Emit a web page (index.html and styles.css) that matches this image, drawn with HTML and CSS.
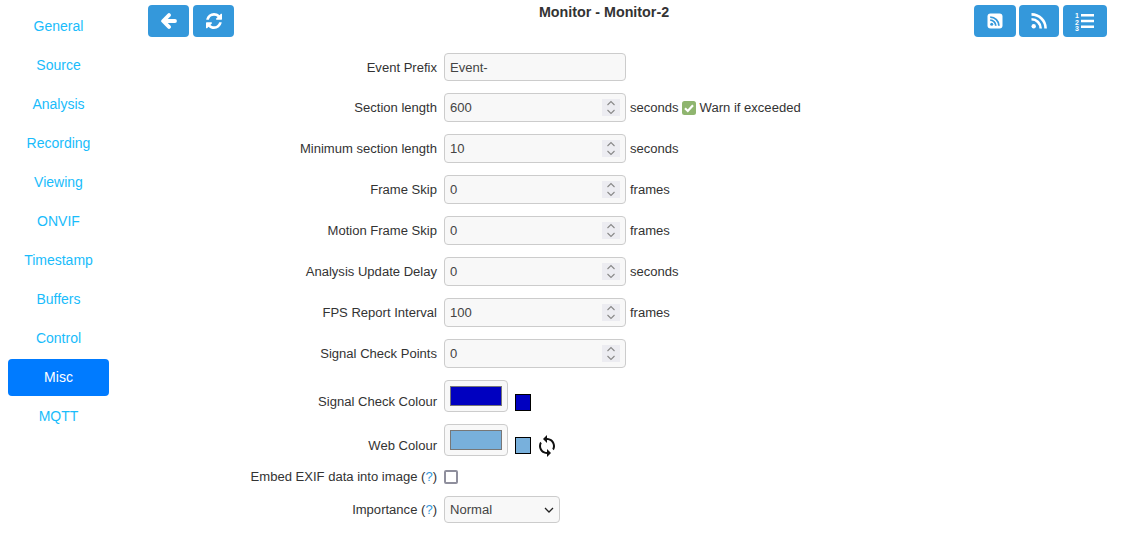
FILE: index.html
```html
<!DOCTYPE html>
<html lang="en">
<head>
<meta charset="utf-8">
<title>Monitor - Monitor-2</title>
<link rel="stylesheet" href="styles.css">
</head>
<body>
<div class="app">
  <nav class="side">
    <a class="tab" href="#">General</a>
    <a class="tab" href="#">Source</a>
    <a class="tab" href="#">Analysis</a>
    <a class="tab" href="#">Recording</a>
    <a class="tab" href="#">Viewing</a>
    <a class="tab" href="#">ONVIF</a>
    <a class="tab" href="#">Timestamp</a>
    <a class="tab" href="#">Buffers</a>
    <a class="tab" href="#">Control</a>
    <a class="tab active" href="#">Misc</a>
    <a class="tab" href="#">MQTT</a>
  </nav>
  <main class="main">
    <header class="head">
      <div class="btns">
        <button class="btn w41" type="button"><svg class="ico" viewBox="0 0 16 16"><path d="M8 2.100 2.100 8 8 13.900M3 8h11" fill="none" stroke="#fff" stroke-width="3.800" stroke-linecap="round" stroke-linejoin="round"/></svg></button>
        <button class="btn w41" type="button"><svg class="ico" viewBox="0 0 1536 1536"><path fill="#fff" d="M1511 928q0 5-1 7-64 268-268 434.500T764 1536q-146 0-282.500-55T238 1324l-129 129q-19 19-45 19t-45-19-19-45V960q0-26 19-45t45-19h448q26 0 45 19t19 45-19 45l-137 137q71 66 161 102t187 36q134 0 250-65t186-179q11-17 53-117 8-23 30-23h192q13 0 22.500 9.500t9.500 22.500zm25-800v448q0 26-19 45t-45 19h-448q-26 0-45-19t-19-45 19-45l138-138Q969 256 768 256q-134 0-250 65T332 500q-11 17-53 117-8 23-30 23H50q-13 0-22.500-9.500T18 608v-7q65-268 270-434.500T768 0q146 0 284 55.500T1297 212l130-129q19-19 45-19t45 19 19 45z"/></svg></button>
      </div>
      <h1 class="title">Monitor - Monitor-2</h1>
      <div class="btns btns-right">
        <button class="btn w42" type="button"><svg class="ico" viewBox="0 0 16 16"><rect x="0.500" y="0.500" width="15" height="15" rx="3" fill="#fff"/><circle cx="4.700" cy="11.300" r="1.500" fill="#3498db"/><path d="M3.200 7.200a5.600 5.600 0 0 1 5.600 5.600M3.200 4.100a8.700 8.700 0 0 1 8.700 8.700" fill="none" stroke="#3498db" stroke-width="1.800"/></svg></button>
        <button class="btn w40" type="button"><svg class="ico" viewBox="0 0 16 16"><circle cx="2.700" cy="13.300" r="2.200" fill="#fff"/><path d="M.5 6.300a9.200 9.200 0 0 1 9.200 9.200M.5 1.400a14.100 14.100 0 0 1 14.100 14.100" fill="none" stroke="#fff" stroke-width="2.600"/></svg></button>
        <button class="btn w44" type="button"><svg class="ico-list" viewBox="0 0 19 20"><text class="num" x="0" y="6.500">1</text><text class="num" x="0" y="13.500">2</text><text class="num" x="0" y="20">3</text><path d="M6 4.200h13M6 10h13M6 15.800h13" stroke="#fff" stroke-width="2.400" fill="none"/></svg></button>
      </div>
    </header>
    <form class="form">
      <div class="row"><label class="lab">Event Prefix</label><input class="field short" type="text" value="Event-"></div>
      <div class="row"><label class="lab">Section length</label><input class="field" type="number" value="600"><span class="unit">seconds</span><span class="warn"><svg class="tick" viewBox="0 0 14 14"><rect width="14" height="14" rx="2.500" fill="#8fb56f"/><path d="M3 7.300 5.800 10 11 4.200" fill="none" stroke="#fff" stroke-width="2.200"/></svg>Warn if exceeded</span></div>
      <div class="row"><label class="lab">Minimum section length</label><input class="field" type="number" value="10"><span class="unit">seconds</span></div>
      <div class="row"><label class="lab">Frame Skip</label><input class="field" type="number" value="0"><span class="unit">frames</span></div>
      <div class="row"><label class="lab">Motion Frame Skip</label><input class="field" type="number" value="0"><span class="unit">frames</span></div>
      <div class="row"><label class="lab">Analysis Update Delay</label><input class="field" type="number" value="0"><span class="unit">seconds</span></div>
      <div class="row"><label class="lab">FPS Report Interval</label><input class="field" type="number" value="100"><span class="unit">frames</span></div>
      <div class="row"><label class="lab">Signal Check Points</label><input class="field" type="number" value="0"></div>
      <div class="row"><label class="lab lab-low">Signal Check Colour</label><input class="color" type="color" value="#0000c0"><span class="swatch swatch-blue"></span></div>
      <div class="row row-web"><label class="lab lab-web">Web Colour</label><input class="color" type="color" value="#78b0dc"><span class="swatch swatch-web"></span><svg class="sync" viewBox="0 0 24 24"><path fill="#111" d="M12 4V1L8 5l4 4V6c3.310 0 6 2.690 6 6 0 1.010-.25 1.970-.7 2.800l1.460 1.460C19.540 15.030 20 13.570 20 12c0-4.420-3.580-8-8-8zm0 14c-3.310 0-6-2.690-6-6 0-1.010.25-1.970.7-2.800L5.240 7.740C4.460 8.970 4 10.430 4 12c0 4.420 3.580 8 8 8v3l4-4-4-4v3z"/></svg></div>
      <div class="row row-exif"><label class="lab">Embed EXIF data into image (<a class="help" href="#">?</a>)</label><input class="check" type="checkbox"></div>
      <div class="row"><label class="lab">Importance (<a class="help" href="#">?</a>)</label><select class="pick"><option>Normal</option></select></div>
    </form>
  </main>
</div>
</body>
</html>
```
FILE: styles.css
```css
* { box-sizing: border-box; }
html, body { margin: 0; padding: 0; background: #fff; }
body { font-family: "Liberation Sans", Arial, sans-serif; font-size: 13.06px; color: #333; }
.app { display: flex; align-items: flex-start; }
.side { width: 117px; flex: none; padding: 8px 8px 0; display: flex; flex-direction: column; gap: 2px; }
.tab { display: block; height: 37px; line-height: 37px; width: 101px; text-align: center; font-size: 14px; color: #19bcfb; text-decoration: none; border-radius: 4px; }
.tab.active { background: #007bff; color: #fff; }
.main { flex: 1; min-width: 0; }
.head { display: flex; justify-content: space-between; align-items: flex-start; padding: 5px 14px 0 31px; height: 53px; }
.btns { display: flex; gap: 4px; }
.btns-right { gap: 3px; }
.btn { height: 32px; border: 0; border-radius: 4px; background: #3498db; padding: 0; display: flex; align-items: center; justify-content: center; }
.w41 { width: 41px; }
.w42 { width: 42px; }
.w40 { width: 40px; margin-right: 1px; }
.w44 { width: 44px; }
.ico { width: 16px; height: 16px; display: block; }
.ico-list { width: 19px; height: 20px; display: block; overflow: visible; }
.num { font: bold 7px "Liberation Sans", sans-serif; fill: #fff; }
.title { margin: -1px 0 0; font-size: 14.3px; font-weight: bold; color: #333; line-height: 16px; }
.form { display: flex; flex-direction: column; gap: 12px; }
.row { display: flex; align-items: center; }
.lab { width: 320px; margin-right: 7px; text-align: right; flex: none; white-space: nowrap; }
.lab-low { padding-top: 11px; }
.lab-web { padding-top: 9px; }
.help { color: #3498db; text-decoration: none; }
.field { width: 182px; height: 29px; flex: none; border: 1px solid #ccc; border-radius: 4px; background: #f8f8f8; padding: 0 5px; font: 13.06px "Liberation Sans", sans-serif; color: #444; }
.field.short { height: 28px; }
.field::-webkit-inner-spin-button {
  -webkit-appearance: none;
  appearance: none;
  opacity: 1;
  width: 18px;
  height: 17px;
  background: #ececf1 url("data:image/svg+xml,%3Csvg xmlns='http://www.w3.org/2000/svg' width='18' height='17'%3E%3Cpath d='M5.500 6 9 2.500 12.500 6M5.500 11 9 14.500 12.500 11' fill='none' stroke='%23888' stroke-width='1.100'/%3E%3C/svg%3E") no-repeat center;
}
.unit { margin-left: 4px; }
.warn { display: inline-flex; align-items: center; gap: 4px; margin-left: 3px; }
.tick { width: 14px; height: 14px; display: block; }
.color { width: 64px; height: 32px; flex: none; border: 1px solid #ccc; border-radius: 4px; background: #f8f8f8; padding: 5px; margin: 0; }
.color::-webkit-color-swatch-wrapper { padding: 0; }
.color::-webkit-color-swatch { border: 1px solid #777; border-radius: 0; }
.swatch { width: 16px; height: 17px; margin-left: 7px; margin-top: 12px; border: 1px solid #000; flex: none; }
.swatch-blue { background: #0000c0; }
.swatch-web { background: #78b0dc; margin-top: 9px; }
.row-web { height: 33px; }
.row-web .color { margin-top: -1px; }
.sync { width: 24px; height: 24px; margin-left: 4px; margin-top: 11px; flex: none; }
.row-exif { height: 15px; }
.check { appearance: none; width: 14px; height: 14px; margin: 0; border: 2px solid #8f8f9d; border-radius: 2px; background: #fff; flex: none; }
.pick {
  -webkit-appearance: none;
  appearance: none;
  width: 116px;
  height: 27px;
  flex: none;
  border: 1px solid #ccc;
  border-radius: 4px;
  padding: 0 5px;
  font: 13.06px "Liberation Sans", sans-serif;
  color: #444;
  background: #f8f8f8 url("data:image/svg+xml,%3Csvg xmlns='http://www.w3.org/2000/svg' width='10' height='6'%3E%3Cpath d='M1 1 5 5 9 1' fill='none' stroke='%23222' stroke-width='1.300'/%3E%3C/svg%3E") no-repeat right 5px center;
}
```
